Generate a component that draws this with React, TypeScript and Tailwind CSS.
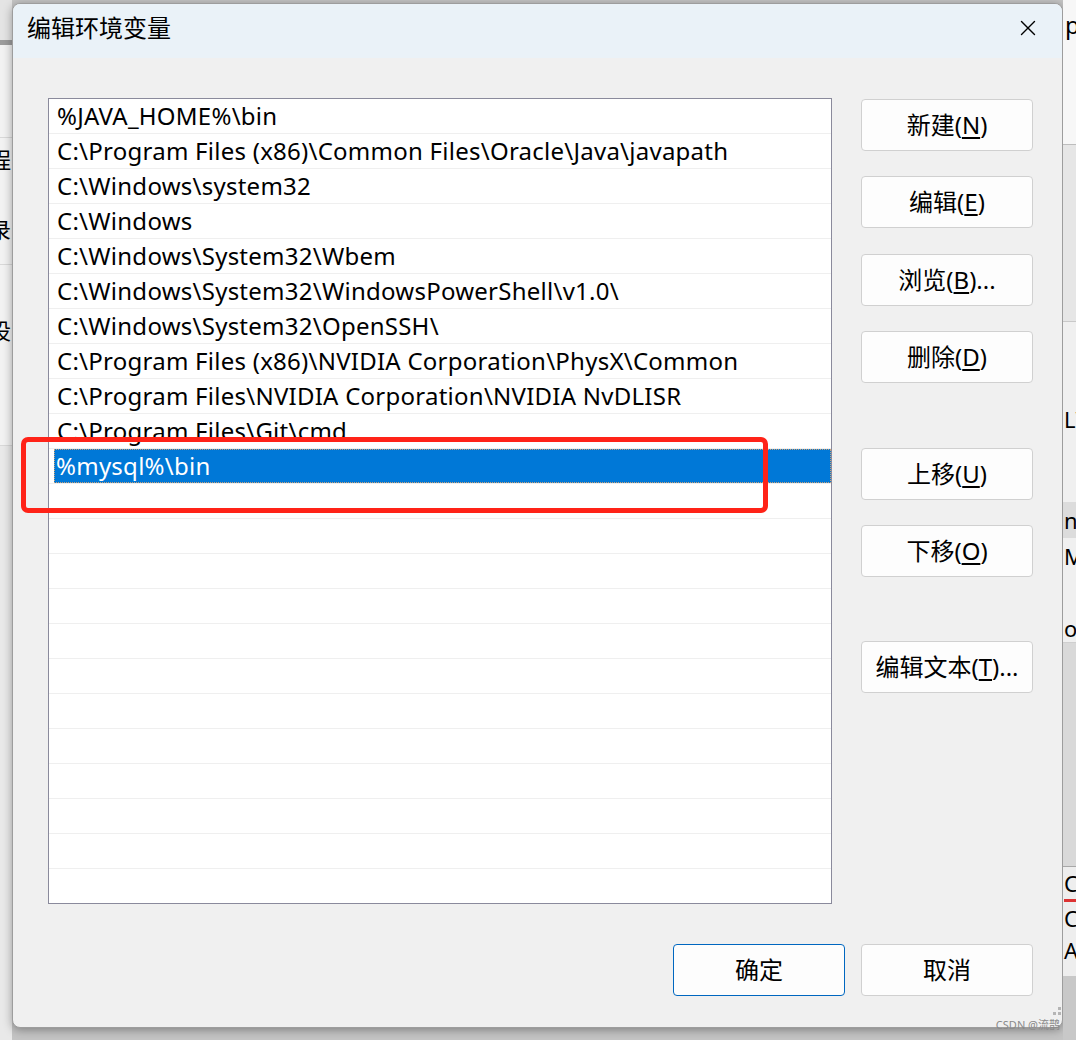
import { X } from "lucide-react";

const paths = [
  "%JAVA_HOME%\\bin",
  "C:\\Program Files (x86)\\Common Files\\Oracle\\Java\\javapath",
  "C:\\Windows\\system32",
  "C:\\Windows",
  "C:\\Windows\\System32\\Wbem",
  "C:\\Windows\\System32\\WindowsPowerShell\\v1.0\\",
  "C:\\Windows\\System32\\OpenSSH\\",
  "C:\\Program Files (x86)\\NVIDIA Corporation\\PhysX\\Common",
  "C:\\Program Files\\NVIDIA Corporation\\NVIDIA NvDLISR",
  "C:\\Program Files\\Git\\cmd",
  "%mysql%\\bin",
];

const rows = Array.from({ length: 23 }, (_, i) => paths[i] ?? "");
const selected = 10;

const font = { fontFamily: "'Noto Sans', 'Noto Sans CJK SC', sans-serif" };

function Btn({
  label,
  mn,
  tail = "",
  primary = false,
  className = "",
}: {
  label: string;
  mn?: string;
  tail?: string;
  primary?: boolean;
  className?: string;
}) {
  return (
    <button
      type="button"
      className={`flex h-[52px] w-[172px] items-center justify-center rounded-[4px] border bg-[#fdfdfd] text-[24px] text-black ${
        primary ? "border-[#0067c0]" : "border-[#d0d0d0]"
      } ${className}`}
    >
      {label}
      {mn && (
        <>
          (<u className="underline-offset-[3px]">{mn}</u>)
        </>
      )}
      {tail}
    </button>
  );
}

export default function App() {
  return (
    <div
      className="relative flex h-[1040px] w-[1076px] overflow-hidden bg-[#c4c4c4]"
      style={font}
    >
      {/* desktop peeking out on the left */}
      <div className="flex w-[12px] shrink-0 flex-col overflow-hidden bg-[#f2f2f2]">
        <div className="h-[40px] bg-[#e4e4e4]" />
        <div className="h-[5px] bg-[#9c9c9c]" />
        <div className="h-[93px] border-b border-[#d8d8d8]" />
        <div className="-ml-[11px] mt-[6px] text-[22px] leading-[30px] text-black">程</div>
        <div className="-ml-[11px] mt-[40px] text-[22px] leading-[30px] text-black">录</div>
        <div className="mt-[20px] border-b border-[#d8d8d8]" />
        <div className="-ml-[11px] mt-[50px] text-[22px] leading-[30px] text-black">设</div>
        <div className="mt-[100px] border-b border-[#d8d8d8]" />
        <div className="flex-1 bg-[#e9e9e9]" />
      </div>

      {/* dialog */}
      <div className="mt-[3px] flex h-[1025px] w-[1051px] shrink-0 flex-col overflow-hidden rounded-[8px] border border-[#9d9d9d] bg-[#f0f0f0] shadow-[0_2px_10px_rgba(0,0,0,0.35)]">
        <div className="flex h-[54px] shrink-0 items-center justify-between bg-[#eaf2f8] pb-[6px] pl-[14px] pr-[21px]">
          <span className="text-[24px] text-black">编辑环境变量</span>
          <X className="size-[26px] text-black" strokeWidth={1.3} />
        </div>

        <div className="flex pl-[35px] pt-[40px]">
          <div className="h-[806px] w-[784px] overflow-hidden border border-[#8a8a9c] bg-white">
            {rows.map((r, i) => (
              <div
                key={i}
                className="h-[35px] border-b border-[#efefef] pl-[5px]"
              >
                {i === selected ? (
                  <div className="h-full bg-[#0078d7] pl-[2px] text-[24px] leading-[34px] tracking-[0.25px] text-white outline-1 -outline-offset-1 outline-dotted outline-[#c9a27a]">
                    {r}
                  </div>
                ) : (
                  <div className="pl-[3px] text-[24px] leading-[34px] tracking-[0.25px] whitespace-nowrap text-black">
                    {r}
                  </div>
                )}
              </div>
            ))}
          </div>

          <div className="ml-[29px] flex flex-col">
            <Btn label="新建" mn="N" className="mt-[1px]" />
            <Btn label="编辑" mn="E" className="mt-[25px]" />
            <Btn label="浏览" mn="B" tail="..." className="mt-[26px]" />
            <Btn label="删除" mn="D" className="mt-[25px]" />
            <Btn label="上移" mn="U" className="mt-[65px]" />
            <Btn label="下移" mn="O" className="mt-[25px]" />
            <Btn label="编辑文本" mn="T" tail="..." className="mt-[64px]" />
          </div>
        </div>

        <div className="mt-[40px] flex justify-end gap-[16px] pr-[29px]">
          <Btn label="确定" primary />
          <Btn label="取消" />
        </div>
      </div>

      {/* desktop peeking out on the right */}
      <div className="flex w-[13px] shrink-0 flex-col overflow-hidden">
        <div className="h-[145px] border-b border-[#bdbdbd] bg-[#f7f7f7] pl-[2px] text-[24px] leading-[50px] text-black">
          p
        </div>
        <div className="h-[177px] border-b border-[#c9c9c9] bg-[#e6e6e6]" />
        <div className="h-[180px] bg-[#f0f0f0] pl-[1px] pt-[82px] text-[22px] leading-[30px] text-black">
          L\
        </div>
        <div className="h-[36px] bg-[#dcdcdc] pl-[1px] text-[22px] leading-[36px] text-black">n</div>
        <div className="h-[105px] border-b border-[#cfcfcf] bg-[#f0f0f0] pl-[1px] text-[22px] leading-[36px] text-black">
          MD
          <div className="mt-[36px]">oc</div>
        </div>
        <div className="h-[223px] bg-[#d9d9d9]" />
        <div className="h-[110px] border-t border-[#a8a8a8] bg-[#eeeeee] pl-[1px] text-[22px] leading-[32px] text-black">
          <div className="border-b-[3px] border-[#d33]">C:</div>
          <div>C</div>
          <div>AN</div>
        </div>
        <div className="flex-1 bg-[#c8c8c8]" />
      </div>

      {/* resize grip */}
      <div className="absolute left-[1048px] top-[1007px] grid grid-cols-3 gap-[2px]">
        <span />
        <span />
        <span className="size-[3px] bg-[#b5b5b5]" />
        <span />
        <span className="size-[3px] bg-[#b5b5b5]" />
        <span className="size-[3px] bg-[#b5b5b5]" />
      </div>

      {/* annotation */}
      <div className="absolute left-[21px] top-[437px] h-[76px] w-[747px] rounded-[7px] border-[5px] border-[#ff2318]" />

      <div className="absolute right-[16px] top-[1017px] text-[11px] text-[#8a8a8a]">
        CSDN @流鹊
      </div>
    </div>
  );
}
